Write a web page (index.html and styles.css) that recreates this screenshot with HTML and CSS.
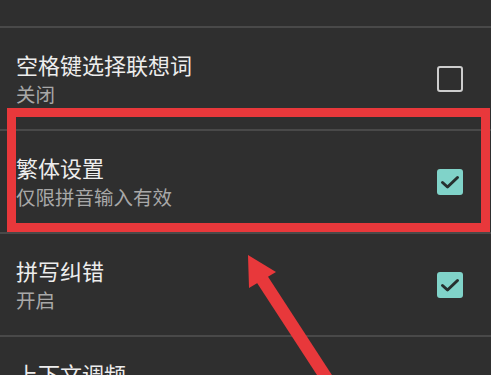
FILE: index.html
```html
<!DOCTYPE html>
<html lang="zh-CN">
<head>
<meta charset="utf-8">
<title>设置</title>
<link rel="stylesheet" href="styles.css">
</head>
<body>
<div class="screen">
  <div class="list">
    <div class="row first">
      <div class="text">
        <div class="title">中英文混输</div>
        <div class="sub">输入时自动识别英文单词</div>
      </div>
      <span class="box"></span>
    </div>
    <div class="row">
      <div class="text">
        <div class="title">空格键选择联想词</div>
        <div class="sub">关闭</div>
      </div>
      <span class="box"></span>
    </div>
    <div class="row">
      <div class="text">
        <div class="title">繁体设置</div>
        <div class="sub">仅限拼音输入有效</div>
      </div>
      <span class="box checked"><svg viewBox="0 0 26 26" class="tick"><path d="M5.5 13.5 L10.5 18 L20.5 8.5"/></svg></span>
    </div>
    <div class="row">
      <div class="text">
        <div class="title">拼写纠错</div>
        <div class="sub">开启</div>
      </div>
      <span class="box checked"><svg viewBox="0 0 26 26" class="tick"><path d="M5.5 13.5 L10.5 18 L20.5 8.5"/></svg></span>
    </div>
    <div class="row">
      <div class="text">
        <div class="title">上下文调频</div>
        <div class="sub">开启</div>
      </div>
      <span class="box"></span>
    </div>
  </div>
  <div class="highlight"></div>
  <svg class="arrow" viewBox="0 0 491 375" width="491" height="375">
    <line x1="262" y1="279" x2="342" y2="402" />
    <polygon points="248,255 249,288 276,272" />
  </svg>
</div>
</body>
</html>
```

FILE: styles.css
```css
html, body {
  margin: 0;
  padding: 0;
  background: #2f2f2f;
}
.screen {
  position: relative;
  width: 491px;
  height: 375px;
  overflow: hidden;
  background: #2f2f2f;
  font-family: "Noto Sans CJK SC", "Noto Sans", sans-serif;
}
.list {
  margin-top: -75px;
}
.row {
  display: flex;
  align-items: center;
  justify-content: space-between;
  height: 101px;
  padding: 0 28px 0 16px;
  border-top: 2px solid #494949;
}
.row.first {
  border-top: none;
}
.row.first .text {
  padding-bottom: 9px;
}
.text {
  display: flex;
  flex-direction: column;
}
.title {
  font-size: 22px;
  line-height: 31px;
  color: #ededed;
}
.sub {
  font-size: 19.5px;
  line-height: 28px;
  color: #a8a8a8;
}
.box {
  box-sizing: border-box;
  width: 26px;
  height: 26px;
  border: 2.5px solid #cdcdcd;
  border-radius: 3px;
  display: block;
  flex: none;
}
.box.checked {
  border: none;
  background: #80d3c9;
}
.tick {
  display: block;
  width: 26px;
  height: 26px;
}
.tick path {
  fill: none;
  stroke: #26302f;
  stroke-width: 3;
  stroke-linecap: round;
  stroke-linejoin: round;
}
.highlight {
  position: absolute;
  left: 7px;
  top: 108px;
  width: 483px;
  height: 124px;
  box-sizing: border-box;
  border: 9.5px solid #e8383b;
}
.arrow {
  position: absolute;
  left: 0;
  top: 0;
}
.arrow line {
  stroke: #e8383b;
  stroke-width: 12.5;
}
.arrow polygon {
  fill: #e8383b;
}
```
